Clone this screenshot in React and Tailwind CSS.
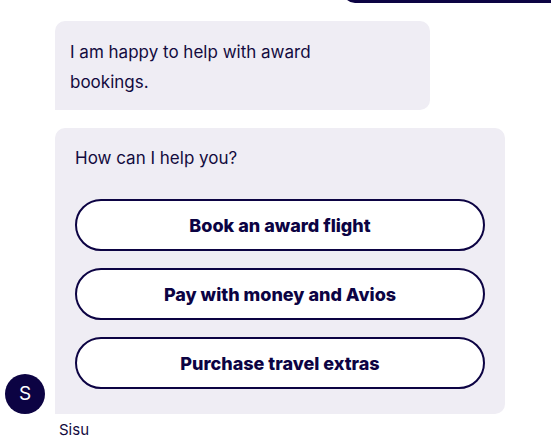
const OPTIONS = ["Book an award flight", "Pay with money and Avios", "Purchase travel extras"];

function Bubble({ children, className = "" }) {
  return (
    <div className={`bg-[#efedf4] rounded-[10px] rounded-bl-none ${className}`}>
      {children}
    </div>
  );
}

export default function App() {
  return (
    <div className="w-[551px] h-[446px] bg-white overflow-hidden text-[#130b3e] font-['Inter',sans-serif]">
      <div className="flex justify-end h-[3px] overflow-hidden items-end">
        <div className="w-[208px] h-[20px] bg-[#0c0343] rounded-bl-[12px]" />
      </div>

      <div className="flex items-end gap-[10px] pl-[5px] mt-[18px]">
        <div className="w-[40px] h-[40px] rounded-full bg-[#0c0343] text-white flex items-center justify-center text-[19px] shrink-0">
          S
        </div>
        <div className="flex flex-col gap-[18px]">
          <Bubble className="w-[375px] px-[15px] pt-[16px] pb-[13px] text-[17px] leading-[30px]">
            <p className="max-w-[270px]">I am happy to help with award bookings.</p>
          </Bubble>
          <Bubble className="w-[450px] px-[20px] pt-[18px] pb-[25px]">
            <p className="text-[17px] leading-[24px]">How can I help you?</p>
            <div className="flex flex-col gap-[17px] mt-[29px]">
              {OPTIONS.map((label) => (
                <button
                  key={label}
                  className="h-[52px] w-full rounded-full border-2 border-[#0c0343] bg-white text-[18px] font-extrabold text-[#0c0343]"
                >
                  {label}
                </button>
              ))}
            </div>
          </Bubble>
        </div>
      </div>

      <p className="pl-[59px] mt-[6px] text-[15px] leading-[20px]">Sisu</p>
    </div>
  );
}
